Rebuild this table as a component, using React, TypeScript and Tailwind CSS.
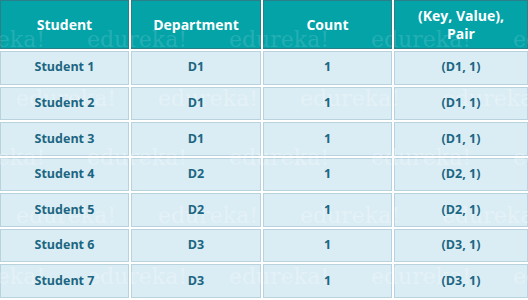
import React from "react";

const rows = [
  ["Student 1", "D1", "1", "(D1, 1)"],
  ["Student 2", "D1", "1", "(D1, 1)"],
  ["Student 3", "D1", "1", "(D1, 1)"],
  ["Student 4", "D2", "1", "(D2, 1)"],
  ["Student 5", "D2", "1", "(D2, 1)"],
  ["Student 6", "D3", "1", "(D3, 1)"],
  ["Student 7", "D3", "1", "(D3, 1)"],
];

const A = [-55, 87, 229, 371, 513];
const B = [16, 158, 300, 442];
const wmRows: { top: number; xs: number[]; cls: string }[] = [
  { top: 29, xs: A, cls: "text-white/15" },
  { top: 88, xs: B, cls: "text-white/25" },
  { top: 147, xs: A, cls: "text-white/25" },
  { top: 205, xs: B, cls: "text-white/25" },
  { top: 266, xs: A, cls: "text-white/25" },
];

const headCls =
  "flex items-center justify-center text-center bg-[#03a3a8] border border-[#2b7f88] text-white font-bold text-[14px] leading-[18px]";

export default function App() {
  return (
    <div className="relative w-[528px] h-[300px] overflow-hidden bg-white" style={{ fontFamily: '"Open Sans", sans-serif' }}>
      <div className="grid grid-cols-[129px_130px_129px_1fr] grid-rows-[49px_repeat(7,minmax(0,1fr))] gap-[2px] h-[300px] pb-[2px]">
        <div className={headCls}>
          <span className="relative z-20">Student</span>
        </div>
        <div className={headCls}>
          <span className="relative z-20">Department</span>
        </div>
        <div className={headCls}>
          <span className="relative z-20">Count</span>
        </div>
        <div className={headCls}>
          <span className="relative z-20">
            (Key, Value),
            <br />
            Pair
          </span>
        </div>
        {rows.map((r, ri) =>
          r.map((c, ci) => (
            <div
              key={ri + "-" + ci}
              className="flex items-center justify-center bg-[#dbedf4] border border-[#b8d3de] text-[#1b6682] font-bold text-[12.5px]"
            >
              <span className="relative z-20">{c}</span>
            </div>
          ))
        )}
      </div>
      <div className="pointer-events-none absolute inset-0 z-10">
        {wmRows.map((row, ri) =>
          row.xs.map((x, xi) => (
            <span
              key={ri + "-" + xi}
              className={"absolute text-[22px] leading-none whitespace-nowrap " + row.cls}
              style={{ left: x, top: row.top, fontFamily: '"DejaVu Serif", serif' }}
            >
              edureka!
            </span>
          ))
        )}
      </div>
    </div>
  );
}
